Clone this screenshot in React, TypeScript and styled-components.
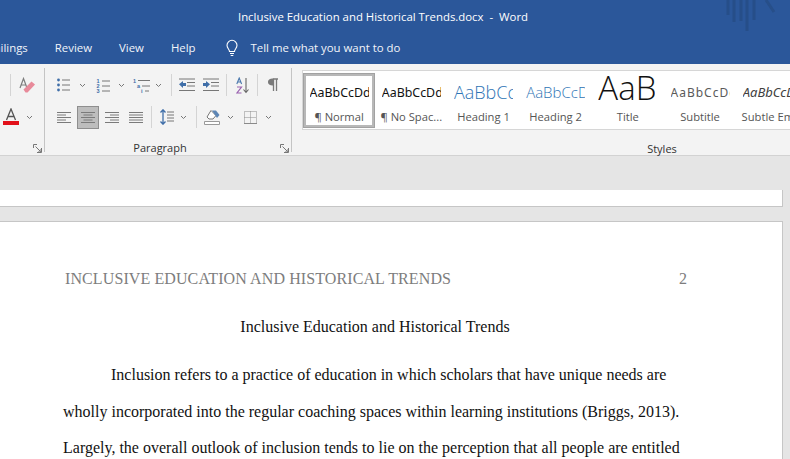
import React from "react";
import styled, { createGlobalStyle } from "styled-components";

const Global = createGlobalStyle`
  html, body { margin: 0; padding: 0; width: 790px; height: 459px; overflow: hidden; background: #e6e6e6; }
  * { box-sizing: border-box; }
`;

const Shell = styled.div`
  width: 790px; height: 459px; overflow: hidden; display: flex; flex-direction: column;
  font-family: "Open Sans", "Noto Sans", sans-serif;
`;
const TitleBar = styled.header`
  position: relative; height: 64px; flex: none; background: #2b579a; color: #fff;
  display: flex; flex-direction: column;
`;
const DocTitle = styled.div`
  height: 32px; display: flex; align-items: center; justify-content: center; font-size: 11.4px; padding-right: 24px;
  white-space: pre;
`;
const TabRow = styled.nav`
  height: 32px; display: flex; align-items: center; font-size: 11.4px; color: #f1f4f9;
  padding-bottom: 1px; margin-left: -16px;
`;
const Tab = styled.span<{ $l: number }>`
  margin-left: ${p => p.$l}px;
`;
const Watermark = styled.svg`
  position: absolute; right: 0; top: 0; width: 80px; height: 34px;
`;
const Ribbon = styled.section`
  height: 92px; flex: none; background: #f3f3f3; border-bottom: 1px solid #d2d2d2; display: flex;
`;
const Group = styled.div<{ $w: number }>`
  width: ${p => p.$w}px; margin: 4px 0 3px; border-right: 1px solid #c4c4c4; display: flex; flex-direction: column; position: relative;
`;
const FontRows = styled.div`
  padding-top: 6px; display: flex; flex-direction: column; gap: 10px; flex: 1;
`;
const Rows = styled(FontRows)`
  padding-left: 12px;
`;
const ToolRow = styled.div<{ $pl?: number }>`
  height: 22px; display: flex; align-items: center; padding-left: ${p => p.$pl ?? 0}px;
`;
const Tool = styled.svg<{ $l?: number; $w: number; $h?: number }>`
  flex: none; width: ${p => p.$w}px; height: ${p => p.$h ?? 16}px; margin-left: ${p => p.$l ?? 0}px; display: block;
`;
const Sep = styled.span<{ $l: number }>`
  flex: none; width: 1px; height: 22px; margin-left: ${p => p.$l}px; background: #d4d4d4;
`;
const Active = styled.span<{ $l: number }>`
  flex: none; width: 22px; height: 23px; margin-left: ${p => p.$l}px; background: #bdbdbd; border: 1px solid #8e8e8e;
  display: flex; align-items: center; justify-content: center;
`;
const GroupFoot = styled.div`
  height: 20px; flex: none; position: relative; display: flex; align-items: center; justify-content: center;
  font-size: 11px; line-height: 8px; color: #333; padding: 12px 16px 0 0;
`;
const Launcher = styled.svg`
  position: absolute; right: 2px; top: 12px; width: 9px; height: 9px;
`;
const StylesGroup = styled.div`
  flex: 1; display: flex; flex-direction: column; padding-left: 10px; min-width: 0;
`;
const Gallery = styled.div`
  margin-top: 6px; height: 60px; width: 500px; background: #fff; border: 1px solid #d6d6d6; padding: 2px 0 0 0; display: flex; align-items: flex-start;
`;
const StyleCard = styled.div<{ $on?: boolean }>`
  flex: none; width: 72.2px; height: 55px; overflow: hidden; display: flex; flex-direction: column; align-items: center;
  border: 3px solid ${p => (p.$on ? "#b8b8b8" : "transparent")};
  outline: ${p => (p.$on ? "1px solid #a2a2a2" : "none")}; outline-offset: -1px;
`;
const Preview = styled.div<{ $size: number; $color: string; $weight?: number; $spacing?: number; $italic?: boolean; $pb?: number; $cut?: number }>`
  flex: none; height: 32px; width: ${p => 59 - (p.$cut ?? 0)}px; margin-right: ${p => p.$cut ?? 0}px;
  overflow: hidden; white-space: nowrap; display: flex; align-items: center; justify-content: flex-start;
  font-family: ${p => (p.$weight === 300 ? '"Open Sans"' : '"Noto Sans"')}, sans-serif;
  font-size: ${p => p.$size}px; color: ${p => p.$color}; font-weight: ${p => p.$weight ?? 400};
  letter-spacing: ${p => p.$spacing ?? 0}px; font-style: ${p => (p.$italic ? "italic" : "normal")};
  padding-bottom: ${p => p.$pb ?? 0}px;
`;
const StyleName = styled.div`
  font-size: 11.2px; color: #555; white-space: nowrap; line-height: 17px;
`;
const StylesLabel = styled.div`
  height: 12px; margin-top: 13px; text-align: center; font-size: 11px; line-height: 12px; color: #333; padding-left: 232px;
`;
const Workspace = styled.main`
  flex: 1; background: #e5e5e5; padding: 34px 7px 0 0; min-height: 0; overflow: hidden;
  display: flex; flex-direction: column; gap: 14px;
`;
const PageEnd = styled.div`
  height: 17px; flex: none; background: #fff; border: 1px solid #c6c6c6; border-width: 0 1px 1px 0;
`;
const Page = styled.article`
  flex: none; height: 300px; background: #fff; border: 1px solid #c6c6c6; border-width: 1px 1px 0 0;
  padding: 47px 95px 0 63px; font-family: "Liberation Serif", "Times New Roman", serif; font-size: 16px; color: #111;
`;
const RunningHead = styled.div`
  display: flex; justify-content: space-between; color: #7d7d7d; line-height: 20px; padding-left: 2px; letter-spacing: 0.1px;
`;
const Heading = styled.h1`
  margin: 28px 0 0; font: inherit; text-align: center; line-height: 20px;
`;
const Line = styled.div<{ $indent?: boolean }>`
  white-space: nowrap; line-height: 20px; margin-top: 16.5px; padding-left: ${p => (p.$indent ? 48 : 0)}px;
  ${Heading} + & { margin-top: 28px; }
`;
const Digit = styled.text`
  font-family: "Liberation Sans", sans-serif; font-size: 5.5px; font-weight: 700; fill: #3f6ea8;
`;

const Chevron = ({ l }: { l: number }) => (
  <Tool $l={l} $w={7} $h={5} viewBox="0 0 7 5"><path d="M1 1l2.5 2.5L6 1" fill="none" stroke="#777" strokeWidth="1" /></Tool>
);
const Lines = ({ l, kind }: { l?: number; kind: "left" | "center" | "right" | "justify" }) => {
  const rows: [number, number][] =
    kind === "left" ? [[0, 14], [0, 9], [0, 14], [0, 9], [0, 14]] :
    kind === "center" ? [[0, 14], [2.5, 11.5], [0, 14], [2.5, 11.5], [0, 14]] :
    kind === "right" ? [[0, 14], [5, 14], [0, 14], [5, 14], [0, 14]] :
    [[0, 14], [0, 14], [0, 14], [0, 14], [0, 14]];
  return (
    <Tool $l={l} $w={14} $h={12} viewBox="0 0 14 12">
      {rows.map(([a, b], i) => <path key={i} d={`M${a} ${1.5 + i * 2.5}H${b}`} stroke="#7a7a7a" strokeWidth="1" />)}
    </Tool>
  );
};

const App = () => (
  <Shell>
    <Global />
    <TitleBar>
      <DocTitle>Inclusive Education and Historical Trends.docx  -  Word</DocTitle>
      <TabRow>
        <Tab $l={0}>Mailings</Tab>
        <Tab $l={27}>Review</Tab>
        <Tab $l={27}>View</Tab>
        <Tab $l={27}>Help</Tab>
        <Tool $l={29} $w={14} $h={18} viewBox="0 0 14 18">
          <path d="M4.5 12.5c0-2-2.5-3.2-2.5-6.2a5 5 0 0 1 10 0c0 3-2.5 4.2-2.5 6.2z M5 14.5h4 M5.7 16.5h2.6" fill="none" stroke="#fff" strokeWidth="1.1" />
        </Tool>
        <Tab $l={12}>Tell me what you want to do</Tab>
      </TabRow>
      <Watermark viewBox="0 0 80 34">
        <g fill="none" strokeWidth="3" stroke="#24497f" opacity=".6">
          <path d="M18 0v15 M24 0v22 M31 0v21 M37 0v31 M44 0v20" />
          <path d="M56 0l8 12" />
        </g>
      </Watermark>
    </TitleBar>
    <Ribbon>
      <Group $w={45}>
        <FontRows>
          <ToolRow $pl={10}>
            <Sep $l={0} />
            <Tool $l={8} $w={17} $h={17} viewBox="0 0 17 17">
              <path d="M1 11L4.5 1.5 8 11 M2.2 8h4.6" fill="none" stroke="#7d7d7d" strokeWidth="1.2" />
              <path d="M4.5 12.5l8-8 3.5 3-7.5 8h-2z" fill="#e88a9a" />
            </Tool>
          </ToolRow>
          <ToolRow $pl={3}>
            <Tool $w={16} $h={18} viewBox="0 0 16 18">
              <path d="M3.5 12L8 1l4.5 11 M5 8.5h6" fill="none" stroke="#555" strokeWidth="1.3" />
              <rect x="0" y="13" width="16" height="4" fill="#e2101a" />
            </Tool>
            <Chevron l={7} />
          </ToolRow>
        </FontRows>
        <GroupFoot>
          <Launcher viewBox="0 0 9 9"><path d="M.5 4V.5H4 M2.5 2.5l5 5 M8.500 4v4.500H4 M5 8h3V5" fill="none" stroke="#777" strokeWidth="1" /></Launcher>
        </GroupFoot>
      </Group>
      <Group $w={247}>
        <Rows>
          <ToolRow>
            <Tool $w={13} $h={14} viewBox="0 0 13 14">
              {[2, 7, 12].map(y => <g key={y}><circle cx="1.500" cy={y} r="1.400" fill="#3f6ea8" /><path d={`M5 ${y}h8`} stroke="#777" /></g>)}
            </Tool>
            <Chevron l={9} />
            <Tool $l={10} $w={14} $h={15} viewBox="0 0 14 15">
              {["1", "2", "3"].map((d, i) => <g key={d}><Digit x="0.500" y={5 + i * 5}>{d}</Digit><path d={`M6 ${3 + i * 5}h8`} stroke="#777" /></g>)}
            </Tool>
            <Chevron l={8} />
            <Tool $l={8} $w={17} $h={15} viewBox="0 0 17 15">
              <Digit x="0" y="5">1</Digit><path d="M5 2.500h12" stroke="#777" />
              <Digit x="4" y="10">a</Digit><path d="M9 8h8" stroke="#777" />
              <Digit x="8" y="15">i</Digit><path d="M12 13h4" stroke="#777" />
            </Tool>
            <Chevron l={5} />
            <Sep $l={9} />
            <Tool $l={7} $w={16} $h={14} viewBox="0 0 16 14">
              <path d="M0 1h16 M8 4.500h8 M8 8h8 M0 12.500h16" stroke="#777" />
              <path d="M0 6.300L4 3v2h3v3H4v2z" fill="#3f6ea8" />
            </Tool>
            <Tool $l={8} $w={16} $h={14} viewBox="0 0 16 14">
              <path d="M0 1h16 M8 4.500h8 M8 8h8 M0 12.500h16" stroke="#777" />
              <path d="M7 6.300L3 3v2H0v3h3v2z" fill="#3f6ea8" />
            </Tool>
            <Sep $l={7} />
            <Tool $l={9} $w={13} $h={17} viewBox="0 0 13 17">
              <path d="M.8 7L3.200 1l2.400 6 M1.500 5h3.400" fill="none" stroke="#4a78ad" strokeWidth="1.100" />
              <path d="M1 10h4.500L1 16h4.500" fill="none" stroke="#9a62b0" strokeWidth="1.200" />
              <path d="M10 1v14 M7.500 12.500L10 15.500l2.500-3" fill="none" stroke="#666" strokeWidth="1.100" />
            </Tool>
            <Sep $l={8} />
            <Tool $l={10} $w={11} $h={14} viewBox="0 0 11 14">
              <path d="M5 1H10 M5.500 1v12 M8.500 1v12" stroke="#7a7a7a" strokeWidth="1.300" fill="none" />
              <path d="M5.500 .5C1.500 .5 0 2 0 4s1.500 3.500 5.500 3.500z" fill="#7a7a7a" />
            </Tool>
          </ToolRow>
          <ToolRow>
            <Lines kind="left" />
            <Active $l={6}><Lines kind="center" /></Active>
            <Lines l={6} kind="right" />
            <Lines l={10} kind="justify" />
            <Sep $l={8} />
            <Tool $l={8} $w={14} $h={16} viewBox="0 0 14 16">
              <path d="M3 1v14 M.5 3.500L3 .8l2.500 2.700 M.5 12.500L3 15.200l2.500-2.700" fill="none" stroke="#3f6ea8" strokeWidth="1.300" />
              <path d="M7 3h7 M7 6h7 M7 9h7 M7 12h7" stroke="#777" />
            </Tool>
            <Chevron l={6} />
            <Sep $l={9} />
            <Tool $l={7} $w={16} $h={16} viewBox="0 0 16 16">
              <path d="M3 8l4-6.500 5 5-3 3.500H5z" fill="#fff" stroke="#777" />
              <path d="M8 1.500h4l3.500 4.500-2.500 3z" fill="#5d86b5" />
              <path d="M.5 12.500h15v3H.5z" fill="#fff" stroke="#999" />
            </Tool>
            <Chevron l={7} />
            <Tool $l={10} $w={13} $h={13} viewBox="0 0 13 13">
              <path d="M.5 .5h12v12H.5z M.5 6.500h12 M6.500 .5v12" fill="none" stroke="#8a8a8a" strokeDasharray="1 1" />
              <path d="M0 12.500h13" stroke="#8a8a8a" />
            </Tool>
            <Chevron l={8} />
          </ToolRow>
        </Rows>
        <GroupFoot>
          Paragraph
          <Launcher viewBox="0 0 9 9"><path d="M.5 4V.5H4 M2.500 2.500l5 5 M8.500 4v4.500H4 M5 8h3V5" fill="none" stroke="#777" strokeWidth="1" /></Launcher>
        </GroupFoot>
      </Group>
      <StylesGroup>
        <Gallery>
          <StyleCard $on><Preview $size={12.4} $color="#111">AaBbCcDdEe</Preview><StyleName>¶ Normal</StyleName></StyleCard>
          <StyleCard><Preview $size={12.4} $color="#111">AaBbCcDdEe</Preview><StyleName>¶ No Spac...</StyleName></StyleCard>
          <StyleCard><Preview $size={18} $color="#2e74b5" $weight={300}>AaBbCcDd</Preview><StyleName>Heading 1</StyleName></StyleCard>
          <StyleCard><Preview $size={15} $color="#2e74b5" $weight={300}>AaBbCcDdE</Preview><StyleName>Heading 2</StyleName></StyleCard>
          <StyleCard><Preview $size={33} $color="#111" $weight={300} $pb={10} $cut={2}>AaBbCc</Preview><StyleName>Title</StyleName></StyleCard>
          <StyleCard><Preview $size={12} $color="#5a5a5a" $spacing={1}>AaBbCcDdE</Preview><StyleName>Subtitle</StyleName></StyleCard>
          <StyleCard><Preview $size={13} $color="#404040" $italic>AaBbCcDdEe</Preview><StyleName>Subtle Em...</StyleName></StyleCard>
        </Gallery>
        <StylesLabel>Styles</StylesLabel>
      </StylesGroup>
    </Ribbon>
    <Workspace>
      <PageEnd />
      <Page>
        <RunningHead><span>INCLUSIVE EDUCATION AND HISTORICAL TRENDS</span><span>2</span></RunningHead>
        <Heading>Inclusive Education and Historical Trends</Heading>
        <Line $indent>Inclusion refers to a practice of education in which scholars that have unique needs are</Line>
        <Line>wholly incorporated into the regular coaching spaces within learning institutions (Briggs, 2013).</Line>
        <Line>Largely, the overall outlook of inclusion tends to lie on the perception that all people are entitled</Line>
      </Page>
    </Workspace>
  </Shell>
);

export default App;
